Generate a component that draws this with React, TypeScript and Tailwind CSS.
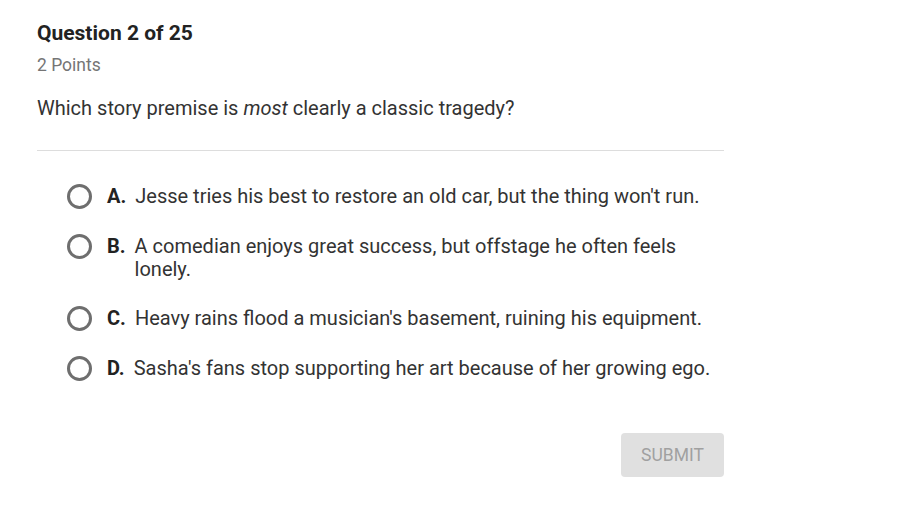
import React, { useState } from "react";

const options = [
  { letter: "A.", text: "Jesse tries his best to restore an old car, but the thing won't run." },
  { letter: "B.", text: "A comedian enjoys great success, but offstage he often feels lonely." },
  { letter: "C.", text: "Heavy rains flood a musician's basement, ruining his equipment." },
  { letter: "D.", text: "Sasha's fans stop supporting her art because of her growing ego." },
];

export default function App() {
  const [selected, setSelected] = useState<number | null>(null);
  return (
    <div className="min-h-[516px] w-full bg-white font-['Roboto',sans-serif]">
      <div className="w-[687px] ml-[37px] pt-[19px]">
        <h1 className="text-[21px] leading-[28px] font-bold text-[#222]">Question 2 of 25</h1>
        <div className="mt-[6px] text-[17.5px] leading-[24px] text-[#757575]">2 Points</div>
        <p className="mt-[18px] text-[20px] leading-[26px] text-[#333]">
          Which story premise is <em>most</em> clearly a classic tragedy?
        </p>
        <div className="mt-[29px] border-t border-[#dddddd]" />
        <div className="mt-[34px] flex flex-col gap-[26px] pl-[30px]">
          {options.map((o, i) => (
            <label key={o.letter} className="flex items-start cursor-pointer" onClick={() => setSelected(i)}>
              <span className="mt-[-1px] w-[25px] h-[25px] shrink-0 rounded-full border-[3px] border-[#6e6e6e] flex items-center justify-center">
                {selected === i && <span className="w-[11px] h-[11px] rounded-full bg-[#6e6e6e]" />}
              </span>
              <span className="ml-[15px] shrink-0 text-[20px] leading-[23px] font-bold text-[#222]">{o.letter}</span>
              <span className="ml-[9px] text-[20px] leading-[23px] text-[#333]">{o.text}</span>
            </label>
          ))}
        </div>
        <div className="mt-[52px] flex justify-end">
          <button className="w-[103px] h-[44px] rounded-[4px] bg-[#e0e0e0] text-[17.5px] text-[#a0a0a0]">
            SUBMIT
          </button>
        </div>
      </div>
    </div>
  );
}
